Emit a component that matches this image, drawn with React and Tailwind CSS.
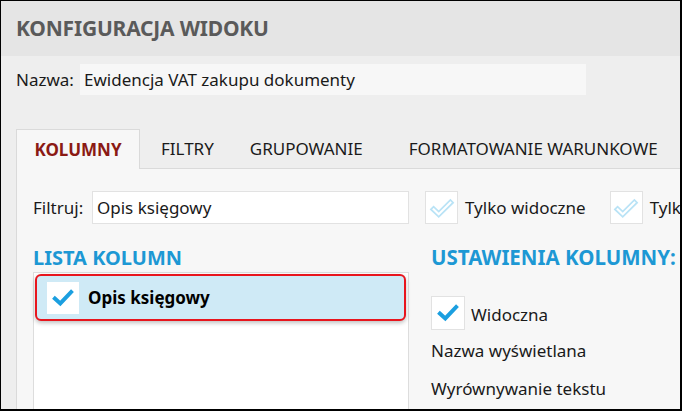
import React from "react";

function CheckFilled({ className = "" }) {
  return (
    <svg viewBox="0 0 24 24" className={className}>
      <path d="M4.5 12.5 L9.5 17 L19.5 6.5" fill="none" stroke="#1b9fe0" strokeWidth="3.6" strokeLinecap="square" strokeLinejoin="miter" />
    </svg>
  );
}

function CheckOutline({ className = "" }) {
  return (
    <svg viewBox="0 0 24 24" className={className}>
      <path d="M2.5 13.2 L4.8 10.9 L9.2 15.1 L19.2 5.1 L21.5 7.4 L9.2 19.6 Z" fill="none" stroke="#b9e3f6" strokeWidth="1.5" strokeLinejoin="miter" />
    </svg>
  );
}

export default function App() {
  return (
    <div className="w-[682px] h-[411px] overflow-hidden bg-[#eeeeee] border-black border-t border-l border-r-2 border-b-2 flex flex-col font-['Noto_Sans',sans-serif] text-[#1a1a1a]">
      <div className="h-[55px] shrink-0 bg-[#e5e5e5] flex items-center pl-[15px]">
        <h1 className="text-[21px] font-bold text-[#5a5a5a] tracking-[-0.2px]">KONFIGURACJA WIDOKU</h1>
      </div>
      <div className="mt-[8px] h-[31px] flex items-center pl-[15px] shrink-0">
        <span className="text-[17px] w-[64px]">Nazwa:</span>
        <div className="w-[506px] h-full bg-[#f7f7f7] flex items-center px-[4px] text-[17px]">Ewidencja VAT zakupu dokumenty</div>
      </div>
      <div className="mt-[34px] ml-[15px] flex h-[40px] shrink-0 border-b border-[#dadada] text-[17px] whitespace-nowrap">
        <div className="w-[124px] h-[40px] shrink-0 bg-[#f7f7f7] border border-b-0 border-[#dadada] flex items-center justify-center font-bold text-[#8b1a14]">KOLUMNY</div>
        <div className="ml-[21px] flex items-center">FILTRY</div>
        <div className="ml-[36px] flex items-center">GRUPOWANIE</div>
        <div className="ml-[46px] flex items-center">FORMATOWANIE WARUNKOWE</div>
      </div>
      <div className="flex-1 ml-[15px] bg-[#f7f7f7] border-l border-[#dadada] pl-[16px] pt-[22px] flex flex-col min-h-0">
        <div className="flex items-center h-[33px] text-[17px] whitespace-nowrap">
          <span className="w-[59px] shrink-0">Filtruj:</span>
          <div className="w-[317px] shrink-0 h-full bg-white border border-[#e2e2e2] flex items-center px-[4px]">Opis księgowy</div>
          <div className="ml-[16px] w-[33px] h-[33px] shrink-0 bg-white border border-[#e2e2e2] flex items-center justify-center">
            <CheckOutline className="w-[28px] h-[28px]" />
          </div>
          <span className="ml-[7px] shrink-0">Tylko widoczne</span>
          <div className="ml-[24px] w-[33px] h-[33px] shrink-0 bg-white border border-[#e2e2e2] flex items-center justify-center">
            <CheckOutline className="w-[28px] h-[28px]" />
          </div>
          <span className="ml-[7px] shrink-0">Tylko ukryte</span>
        </div>
        <div className="flex flex-1 mt-[20px] min-h-0">
          <div className="w-[376px] shrink-0 flex flex-col">
            <h2 className="text-[20px] font-bold text-[#1d98d4] leading-[27px]">LISTA KOLUMN</h2>
            <div className="mt-[1px] flex-1 bg-white border border-b-0 border-[#dddddd] p-[1px]">
              <div className="h-[47px] w-[371px] rounded-[6px] border-2 border-[#e8151d] bg-[#cfeaf6] shadow-[0_2px_4px_rgba(0,0,0,0.25)] flex items-center pl-[10px]">
                <div className="w-[32px] h-[32px] bg-white flex items-center justify-center">
                  <CheckFilled className="w-[26px] h-[26px]" />
                </div>
                <span className="ml-[9px] text-[17px] font-bold text-black">Opis księgowy</span>
              </div>
            </div>
          </div>
          <div className="ml-[22px] flex flex-col text-[17px] whitespace-nowrap">
            <h2 className="text-[20.5px] font-bold text-[#1d98d4] leading-[27px]">USTAWIENIA KOLUMNY:</h2>
            <div className="mt-[25px] flex items-center">
              <div className="w-[34px] h-[34px] bg-white border border-[#e2e2e2] flex items-center justify-center">
                <CheckFilled className="w-[26px] h-[26px]" />
              </div>
              <span className="ml-[6px] mt-[4px]">Widoczna</span>
            </div>
            <div className="mt-[8px]">Nazwa wyświetlana</div>
            <div className="mt-[12px]">Wyrównywanie tekstu</div>
          </div>
        </div>
      </div>
    </div>
  );
}
